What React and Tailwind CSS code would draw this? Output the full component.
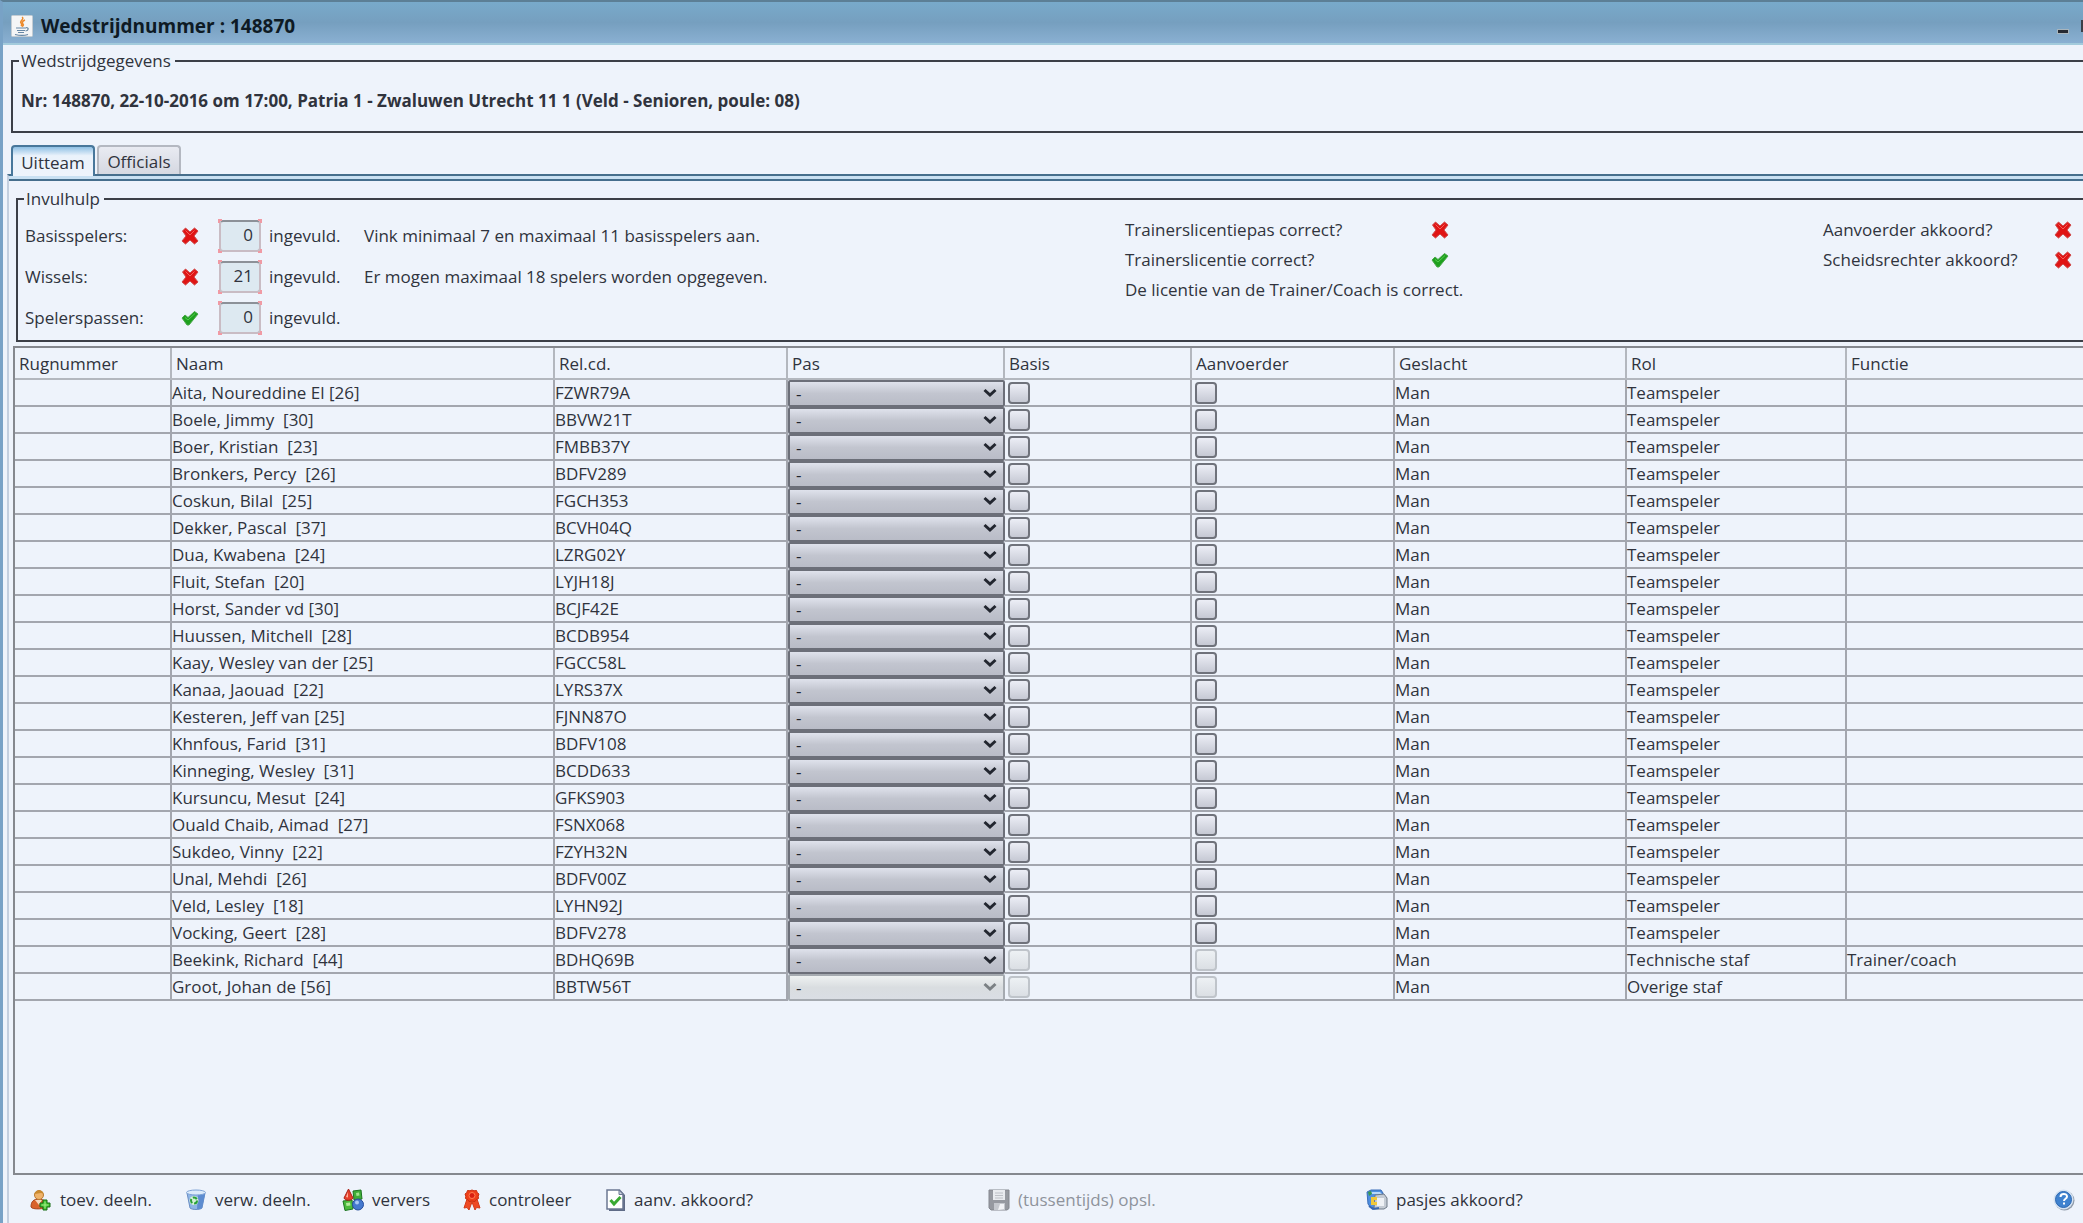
import { useState } from "react";

const spelers = [
  { naam: "Aita, Noureddine El [26]", code: "FZWR79A" },
  { naam: "Boele, Jimmy  [30]", code: "BBVW21T" },
  { naam: "Boer, Kristian  [23]", code: "FMBB37Y" },
  { naam: "Bronkers, Percy  [26]", code: "BDFV289" },
  { naam: "Coskun, Bilal  [25]", code: "FGCH353" },
  { naam: "Dekker, Pascal  [37]", code: "BCVH04Q" },
  { naam: "Dua, Kwabena  [24]", code: "LZRG02Y" },
  { naam: "Fluit, Stefan  [20]", code: "LYJH18J" },
  { naam: "Horst, Sander vd [30]", code: "BCJF42E" },
  { naam: "Huussen, Mitchell  [28]", code: "BCDB954" },
  { naam: "Kaay, Wesley van der [25]", code: "FGCC58L" },
  { naam: "Kanaa, Jaouad  [22]", code: "LYRS37X" },
  { naam: "Kesteren, Jeff van [25]", code: "FJNN87O" },
  { naam: "Khnfous, Farid  [31]", code: "BDFV108" },
  { naam: "Kinneging, Wesley  [31]", code: "BCDD633" },
  { naam: "Kursuncu, Mesut  [24]", code: "GFKS903" },
  { naam: "Ouald Chaib, Aimad  [27]", code: "FSNX068" },
  { naam: "Sukdeo, Vinny  [22]", code: "FZYH32N" },
  { naam: "Unal, Mehdi  [26]", code: "BDFV00Z" },
  { naam: "Veld, Lesley  [18]", code: "LYHN92J" },
  { naam: "Vocking, Geert  [28]", code: "BDFV278" },
  { naam: "Beekink, Richard  [44]", code: "BDHQ69B", rol: "Technische staf", functie: "Trainer/coach", staf: true },
  { naam: "Groot, Johan de [56]", code: "BBTW56T", rol: "Overige staf", staf: true, geenPas: true },
];

const kolommen = ["Rugnummer", "Naam", "Rel.cd.", "Pas", "Basis", "Aanvoerder", "Geslacht", "Rol", "Functie"];

function Kruis() {
  return (
    <svg viewBox="0 0 18 18" className="size-[18px]" role="img" aria-label="niet correct">
      <path d="M1.500 4 4.500 1 9 5 13.500 1 17 4 13 9 17 14 13.500 17 9 13 4.500 17 1 14 5 9z" fill="#e01414" stroke="#cf4a4a" strokeLinejoin="round" />
      <path d="M4.500 3.500 9 8l4.500-4.500" fill="none" stroke="#f2605c" strokeWidth="1" />
    </svg>
  );
}

function Vink() {
  return (
    <svg viewBox="0 0 18 18" className="size-[18px]" role="img" aria-label="correct">
      <path d="M1 9 4 6 7 8.500 13.500 2.500 17 5 8 16 6 16z" fill="#1ea01e" stroke="#4aa84a" strokeLinejoin="round" />
      <path d="m4 8.500 3 2.500 7-6.500" fill="none" stroke="#55cc50" />
    </svg>
  );
}

function Persoon() {
  return (
    <svg viewBox="0 0 22 22" className="size-[22px]" aria-hidden="true">
      <path d="M1 18c0-6 3-8 8-8s7 3 7 8c0 2-14 3-15 0z" fill="#d9622b" stroke="#a8441c" />
      <path d="M5 11 9 16l3-5z" fill="#f6d9c0" />
      <circle cx="9" cy="6" r="4.500" fill="#efb36b" stroke="#b87a32" />
      <path d="M4.500 5C5 1 13 0 13.500 5 11 3 8 5 4.500 5z" fill="#c98a2f" />
      <path d="M13 11h4v3h3v4h-3v3h-4v-3h-3v-4h3z" fill="#3fc12f" stroke="#176d14" />
      <path d="M15 12.500v7M11.500 16h7" stroke="#a5ee8c" />
    </svg>
  );
}

function Prullenbak() {
  return (
    <svg viewBox="0 0 22 22" className="size-[22px]" aria-hidden="true">
      <path d="m2 4 3 15c2 2 10 2 12 0l3-15z" fill="#8fb5e6" stroke="#6b8fc4" />
      <path d="m13 6-1 14c2 0 4 0 5-1l3-14z" fill="#5d8cd0" />
      <ellipse cx="11" cy="3.500" rx="9.500" ry="2.500" fill="#dcebfa" stroke="#7fa3d6" />
      <circle cx="9" cy="11.500" r="4.500" fill="#d5f0d8" />
      <circle cx="9" cy="11.500" r="3" fill="none" stroke="#28a038" strokeWidth="2" strokeDasharray="4.500 1.800" />
    </svg>
  );
}

function Vormen() {
  return (
    <svg viewBox="0 0 22 22" className="size-[22px]" aria-hidden="true">
      <path d="m11 2 8-1 1 9-8 1z" fill="#3fae38" stroke="#1c7420" />
      <path d="m1 12 9-1 1 9-8 1.500z" fill="#4bbb3c" stroke="#1c7420" />
      <path d="m4 14 4-.5.500 3-4 .500z" fill="#b5ec9c" />
      <path d="m14 4 3-.5.500 3-3 .500z" fill="#a2e48e" />
      <path d="M6.500 0 11 9c-1 3-8 3-9 0z" fill="#e5402c" stroke="#a82218" />
      <path d="m6 3-2 5 2 .5z" fill="#ffb09c" />
      <circle cx="16" cy="15.500" r="5.500" fill="#4579cf" stroke="#284f9c" />
      <circle cx="15" cy="13.500" r="2" fill="#a9c8f5" />
    </svg>
  );
}

function Rozet() {
  return (
    <svg viewBox="0 0 18 22" className="h-[22px] w-[18px]" aria-hidden="true">
      <path d="m4 10-3 9 3-.5L6 21l3-8 3 8 1.500-2.500 3.500.5-3-9z" fill="#ef4a24" stroke="#d23a18" />
      <path d="m9 1 2 .8 2.500-.3.800 2.200 1.700 1.300-.8 2.200.3 2.300-2.200 1L12 12.500 9 12l-3 .5-1.300-2-2.200-1 .3-2.300L2 5l1.700-1.300.8-2.200L7 1.800z" fill="#f0401a" stroke="#c83010" />
      <circle cx="9" cy="6.500" r="3" fill="#d92010" stroke="#ff8052" />
    </svg>
  );
}

function Document() {
  return (
    <svg viewBox="0 0 20 22" className="h-[22px] w-5" aria-hidden="true">
      <path d="M3 2h12l4 4v16H3z" fill="#5f6b86" />
      <path d="M1 1h12.500L17 5v15H1z" fill="#fff" stroke="#6c7893" strokeWidth="1.500" />
      <path d="M13 1v4.500h4z" fill="#cfd6e4" stroke="#6c7893" />
      <path d="m4.500 11 3.500 4 6.500-7" fill="none" stroke="#3aaa32" strokeWidth="3" />
    </svg>
  );
}

function Diskette() {
  return (
    <svg viewBox="0 0 22 22" className="size-[22px]" aria-hidden="true">
      <path d="M1 1h20v18.500L19 21H3l-2-2z" fill="#9699a0" stroke="#85888f" />
      <path d="M5 1h12v10H5z" fill="#e9ebef" />
      <path d="M7 4h8M7 6.500h8M7 9h8" stroke="#bdc0c6" />
      <path d="M6 14h11v7H6z" fill="#c5c8ce" />
      <path d="M12 15h4v5l-6 1z" fill="#f2f3f6" />
    </svg>
  );
}

function Pasjes() {
  return (
    <svg viewBox="0 0 22 22" className="size-[22px]" aria-hidden="true">
      <path d="m1 3 4-2h10l2 3v12l-12 3-3-4z" fill="#4f8fe0" stroke="#3a6db8" />
      <path d="M5 3h9l2 2H6z" fill="#b8d8fa" />
      <path d="m2 3 3-1 1 3-3 2z" fill="#3a9a50" />
      <path d="m9 6 9-1 3 4v9l-3 2H8z" fill="#c4cbd4" stroke="#6f7a88" />
      <path d="M11 9h7v8h-7z" fill="#eef1f5" />
      <path d="M5 8h6v3H8v2h3v3H5z" fill="#f0c83a" />
      <path d="m3 17 4 3 6-1" fill="none" stroke="#3767b0" strokeWidth="2" />
    </svg>
  );
}

function Help() {
  return (
    <svg viewBox="0 0 22 22" className="size-[22px]" aria-hidden="true">
      <circle cx="11.500" cy="11.500" r="10" fill="#8f9aa8" />
      <circle cx="10.500" cy="10.500" r="10" fill="#d4e2f2" />
      <circle cx="10.500" cy="10.500" r="8" fill="#3f82cf" stroke="#2d68b2" />
      <path d="M7.500 8c0-4 6.500-4 6.500-.5 0 2.500-3 2-3 4.500m0 1.500v2" fill="none" stroke="#fff" strokeWidth="2" />
    </svg>
  );
}

function JavaLogo() {
  return (
    <svg viewBox="0 0 22 22" className="size-[22px]" aria-hidden="true">
      <rect x=".5" y=".5" width="21" height="21" rx="1" fill="#f4f5f6" stroke="#c3ccd3" />
      <path d="M11 2c3 2-3 4-1 6 1 1 1 2 0 3M14 5c-3 1-3 3-2 4s0 2-1 2.500" fill="none" stroke="#ec8a2c" strokeWidth="1.500" />
      <path d="M5 13h10M6 15.500h8M7 17.500h6M15 12.500c3 0 3 3-.5 3.500M4 19.500c4 1 10 1 13 0" fill="none" stroke="#6687a5" strokeWidth="1.200" />
    </svg>
  );
}

function PasKeuze({ naam, disabled }) {
  return (
    <div className="relative h-[27px]">
      <select
        aria-label={`Pas ${naam}`}
        disabled={disabled}
        className="block h-full w-full appearance-none rounded-[2px] border-2 border-[#6c6f79] bg-linear-to-b from-[#dfe2ec] via-[#c2c5cf] to-[#b9bcc7] px-1.5 leading-5 text-[#20242e] opacity-100 disabled:border-[#a5aab0] disabled:from-[#eef1f1] disabled:via-[#d9dde0] disabled:to-[#dadee4]"
      >
        <option>-</option>
      </select>
      <svg viewBox="0 0 14 10" className="pointer-events-none absolute top-2 right-2 h-2.5 w-3.5" aria-hidden="true">
        <path d="m1.500 2 5.500 5 5.500-5" fill="none" stroke={disabled ? "#7b8084" : "#22262f"} strokeWidth="3" />
      </svg>
    </div>
  );
}

function Vakje({ label, disabled }) {
  return (
    <input
      type="checkbox"
      aria-label={label}
      disabled={disabled}
      className="ml-[3px] block size-[22px] appearance-none rounded-[4px] border-2 border-[#6f727b] bg-linear-to-b from-[#eceef6] to-[#c6c9d4] checked:from-[#5d7f9f] disabled:border-[#bfc4ca] disabled:from-[#edf1f4] disabled:to-[#dbdfe4]"
    />
  );
}

function InvulRij({ id, label, ok, waarde, uitleg }) {
  return (
    <div className="flex h-[41px] items-center">
      <label htmlFor={id} className="w-[156px]">{label}</label>
      <span className="w-[38px]">{ok ? <Vink /> : <Kruis />}</span>
      <span className="relative">
        <input
          id={id}
          readOnly
          value={waarde}
          className="block h-8 w-[42px] rounded-[4px] border-2 border-[#c9bcc4] border-t-[#8c9198] bg-[#dde9f1] pr-1.5 pb-0.5 text-right"
        />
        <i className="absolute -top-px -left-px size-1 border-t-2 border-l-2 border-[#f09aa4]" />
        <i className="absolute -top-px -right-px size-1 border-t-2 border-r-2 border-[#f09aa4]" />
        <i className="absolute -bottom-px -left-px size-1 border-b-2 border-l-2 border-[#f09aa4]" />
        <i className="absolute -right-px -bottom-px size-1 border-r-2 border-b-2 border-[#f09aa4]" />
      </span>
      <span className="ml-2 w-[95px]">ingevuld.</span>
      <span>{uitleg}</span>
    </div>
  );
}

function Knop({ icon, children, className = "", disabled, ...rest }) {
  return (
    <button type="button" disabled={disabled} className={`flex items-center gap-2 whitespace-nowrap disabled:text-[#8f939c] ${className}`} {...rest}>
      {icon}
      {children}
    </button>
  );
}

export default function App() {
  const [tab, setTab] = useState("Uitteam");

  return (
    <div className="flex min-h-screen flex-col overflow-hidden border-t-2 border-l-3 border-t-[#5c7f96] border-l-[#78a2c6] bg-[#eef3fb] font-['Open_Sans','Noto_Sans',sans-serif] text-[17px] leading-6 text-[#30333d]">
      <header className="flex h-[43px] items-center gap-2 border-b-2 border-[#a3cbdc] bg-linear-to-b from-[#78aacb] via-[#769fbf] to-[#8ab0d2] pt-1.5 pl-2 text-[#0e1a24]">
        <JavaLogo />
        <h1 className="flex-1 text-[19px] font-bold">Wedstrijdnummer : 148870</h1>
        <button type="button" aria-label="Minimaliseren" className="mr-1 flex h-5 w-3 items-end pb-0.5">
          <span className="h-[5px] w-3 border border-[#a8b5bd] bg-[#252a33]" />
        </button>
        <button type="button" aria-label="Maximaliseren" className="h-3 w-0.5 bg-[#3a3f48]" />
      </header>

      <fieldset className="mt-1 ml-2 h-[84px] border-2 border-r-0 border-[#3c3f47] pl-1.5">
        <legend className="pr-1 pl-0.5">Wedstrijdgegevens</legend>
        <p className="pt-4 pl-0.5 font-bold">
          Nr: 148870, 22-10-2016 om 17:00, Patria 1 - Zwaluwen Utrecht 11 1 (Veld - Senioren, poule: 08)
        </p>
      </fieldset>

      <div role="tablist" className="mt-3 ml-2 flex items-end gap-0.5">
        {["Uitteam", "Officials"].map((t) => (
          <button
            key={t}
            type="button"
            role="tab"
            aria-selected={tab === t}
            onClick={() => setTab(t)}
            className={
              tab === t
                ? "relative z-10 -mb-0.5 h-[31px] w-[84px] rounded-t-[4px] border-2 border-b-0 border-[#48779b] bg-linear-to-b from-[#8fc0e4] via-[#eaf2fb] via-30% to-[#eef3fb] pt-0.5"
                : "h-[29px] w-[84px] rounded-t-[4px] border-2 border-b-0 border-[#b4b8c1] bg-linear-to-b from-[#e9ebf2] to-[#d5d8e1] pt-0.5"
            }
          >
            {t}
          </button>
        ))}
      </div>

      <main className="ml-1 flex flex-1 flex-col border-t-2 border-l-2 border-t-[#466e8c] border-l-[#c3cfdf]">
        <div className="h-[5px] border-b-2 border-b-[#466e8c] bg-[#c9e0f2]" />

        <fieldset className="mt-1.5 ml-[7px] h-[155px] border-2 border-r-0 border-[#3c3f47]">
          <legend className="ml-1.5 pr-1 pl-0.5">Invulhulp</legend>
          <div className="flex items-start pt-1 pl-[7px]">
            <div className="w-[1100px] shrink-0">
              <InvulRij id="basis" label="Basisspelers:" waarde="0" uitleg="Vink minimaal 7 en maximaal 11 basisspelers aan." />
              <InvulRij id="wissels" label="Wissels:" waarde="21" uitleg="Er mogen maximaal 18 spelers worden opgegeven." />
              <InvulRij id="passen" label="Spelerspassen:" ok waarde="0" />
            </div>
            <div className="flex-1 leading-[30px]">
              <div className="flex h-[30px] items-center">
                <span className="w-[306px]">Trainerslicentiepas correct?</span>
                <Kruis />
              </div>
              <div className="flex h-[30px] items-center">
                <span className="w-[306px]">Trainerslicentie correct?</span>
                <Vink />
              </div>
              <p>De licentie van de Trainer/Coach is correct.</p>
            </div>
            <div className="w-[260px] shrink-0">
              <div className="flex h-[30px] items-center">
                <span className="w-[231px]">Aanvoerder akkoord?</span>
                <Kruis />
              </div>
              <div className="flex h-[30px] items-center">
                <span className="w-[231px]">Scheidsrechter akkoord?</span>
                <Kruis />
              </div>
            </div>
          </div>
        </fieldset>

        <div className="mt-1 ml-1 flex-1 border-2 border-r-0 border-[#85888e]">
          <table className="w-full table-fixed border-separate border-spacing-0 text-left">
            <colgroup>
              <col className="w-[157px]" />
              <col className="w-[383px]" />
              <col className="w-[233px]" />
              <col className="w-[217px]" />
              <col className="w-[187px]" />
              <col className="w-[203px]" />
              <col className="w-[232px]" />
              <col className="w-[220px]" />
              <col />
            </colgroup>
            <thead>
              <tr className="h-8">
                {kolommen.map((k) => (
                  <th key={k} className="border-r-2 border-b-2 border-[#b3b7be] p-0 pt-0.5 pl-1 font-normal last:border-r-0">
                    {k}
                  </th>
                ))}
              </tr>
            </thead>
            <tbody>
              {spelers.map((s) => (
                <tr key={s.code} className="h-[27px] *:border-r-2 *:border-b-2 *:border-[#a3a6ae] *:p-0 *:last:border-r-0">
                  <td />
                  <td className="whitespace-pre">{s.naam}</td>
                  <td>{s.code}</td>
                  <td className="border-r-0! border-b-0!">
                    <PasKeuze naam={s.naam} disabled={s.geenPas} />
                  </td>
                  <td>
                    <Vakje label={`Basis ${s.naam}`} disabled={s.staf} />
                  </td>
                  <td>
                    <Vakje label={`Aanvoerder ${s.naam}`} disabled={s.staf} />
                  </td>
                  <td>Man</td>
                  <td>{s.rol ?? "Teamspeler"}</td>
                  <td>{s.functie}</td>
                </tr>
              ))}
            </tbody>
          </table>
        </div>

        <footer className="flex h-12 items-center pt-0.5 pl-[21px]">
          <Knop icon={<Persoon />} className="w-[155px]">toev. deeln.</Knop>
          <Knop icon={<Prullenbak />} className="w-[157px]">verw. deeln.</Knop>
          <Knop icon={<Vormen />} className="w-[121px]">ververs</Knop>
          <Knop icon={<Rozet />} className="w-[143px]">controleer</Knop>
          <Knop icon={<Document />} className="w-[382px]">aanv. akkoord?</Knop>
          <Knop icon={<Diskette />} className="w-[378px]" disabled>(tussentijds) opsl.</Knop>
          <Knop icon={<Pasjes />} className="flex-1">pasjes akkoord?</Knop>
          <Knop icon={<Help />} className="mr-2" aria-label="Help" />
        </footer>
      </main>
    </div>
  );
}
